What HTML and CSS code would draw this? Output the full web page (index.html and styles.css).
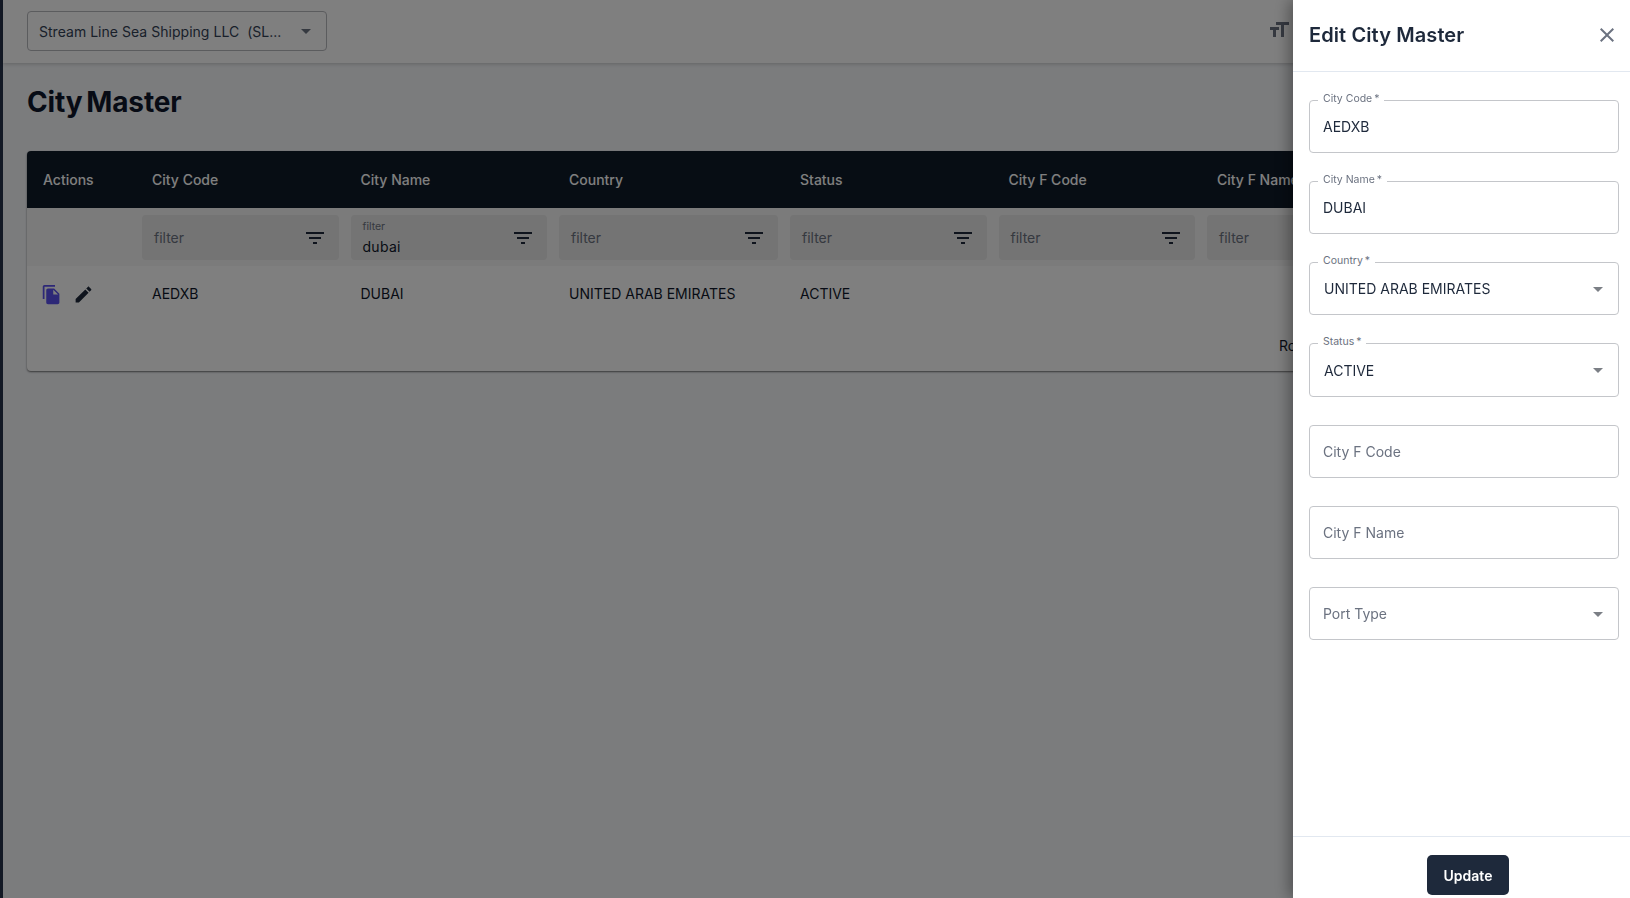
FILE: index.html
```html
<!DOCTYPE html>
<html lang="en">
<head>
  <meta charset="UTF-8">
  <meta name="viewport" content="width=device-width, initial-scale=1.0">
  <title>City Master</title>
  <link rel="stylesheet" href="styles.css">
</head>
<body>
  <svg class="sprite" aria-hidden="true">
    <symbol id="i-drop" viewBox="0 0 24 24"><path d="M7 10l5 5 5-5z"/></symbol>
    <symbol id="i-filter" viewBox="0 0 24 24"><path d="M10 18h4v-2h-4v2zM3 6v2h18V6H3zm3 7h12v-2H6v2z"/></symbol>
    <symbol id="i-size" viewBox="0 0 24 24"><path d="M9 4v3h5v12h3V7h5V4H9zm-6 8h3v7h3v-7h3V9H3v3z"/></symbol>
    <symbol id="i-copy" viewBox="0 0 24 24"><path d="M16 1H4c-1.1 0-2 .9-2 2v14h2V3h12V1zm-1 4l6 6v10c0 1.1-.9 2-2 2H7.99C6.89 23 6 22.1 6 21l.01-14c0-1.1.89-2 1.99-2h7zm-1 7h5.5L14 6.5V12z"/></symbol>
    <symbol id="i-edit" viewBox="0 0 24 24"><path d="M3 17.25V21h3.75L17.81 9.94l-3.75-3.75L3 17.25zM20.71 7.04c.39-.39.39-1.02 0-1.41l-2.34-2.34c-.39-.39-1.02-.39-1.41 0l-1.83 1.83 3.75 3.75 1.83-1.83z"/></symbol>
    <symbol id="i-close" viewBox="0 0 24 24"><path d="M19 6.41 17.59 5 12 10.59 6.41 5 5 6.41 10.59 12 5 17.59 6.41 19 12 13.41 17.59 19 19 17.59 13.41 12z"/></symbol>
  </svg>

  <div class="sidebar"></div>

  <div class="main">
    <header class="topbar">
      <div class="company-select">
        <span class="company-name">Stream Line Sea Shipping LLC&nbsp; (SL...</span>
        <svg class="icon caret"><use href="#i-drop"/></svg>
      </div>
      <svg class="icon font-size-btn"><use href="#i-size"/></svg>
    </header>

    <div class="content">
      <h1>City Master</h1>

      <div class="grid-card">
        <div class="grid-row grid-head">
          <div class="cell cell-first">Actions</div>
          <div class="cell">City Code</div>
          <div class="cell">City Name</div>
          <div class="cell">Country</div>
          <div class="cell">Status</div>
          <div class="cell">City F Code</div>
          <div class="cell">City F Name</div>
        </div>

        <div class="grid-row grid-filters">
          <div></div>
          <div class="filter"><span class="filter-hint">filter</span><svg class="icon"><use href="#i-filter"/></svg></div>
          <div class="filter">
            <div class="filter-filled"><span class="filter-label">filter</span><span class="filter-value">dubai</span></div>
            <svg class="icon"><use href="#i-filter"/></svg>
          </div>
          <div class="filter"><span class="filter-hint">filter</span><svg class="icon"><use href="#i-filter"/></svg></div>
          <div class="filter"><span class="filter-hint">filter</span><svg class="icon"><use href="#i-filter"/></svg></div>
          <div class="filter"><span class="filter-hint">filter</span><svg class="icon"><use href="#i-filter"/></svg></div>
          <div class="filter"><span class="filter-hint">filter</span><svg class="icon"><use href="#i-filter"/></svg></div>
        </div>

        <div class="grid-row grid-data">
          <div class="cell cell-actions">
            <svg class="icon icon-copy"><use href="#i-copy"/></svg>
            <svg class="icon icon-edit"><use href="#i-edit"/></svg>
          </div>
          <div class="cell">AEDXB</div>
          <div class="cell">DUBAI</div>
          <div class="cell">UNITED ARAB EMIRATES</div>
          <div class="cell">ACTIVE</div>
          <div class="cell"></div>
          <div class="cell"></div>
        </div>

        <div class="pager">Rows</div>
      </div>
    </div>
  </div>

  <div class="backdrop"></div>

  <aside class="drawer">
    <div class="drawer-head">
      <h2>Edit City Master</h2>
      <svg class="icon close-btn"><use href="#i-close"/></svg>
    </div>

    <form class="drawer-body">
      <div class="field">
        <span class="field-label">City Code&#8201;*</span>
        <span class="field-value">AEDXB</span>
      </div>
      <div class="field">
        <span class="field-label">City Name&#8201;*</span>
        <span class="field-value">DUBAI</span>
      </div>
      <div class="field field-select">
        <span class="field-label">Country&#8201;*</span>
        <span class="field-value">UNITED ARAB EMIRATES</span>
        <svg class="icon caret"><use href="#i-drop"/></svg>
      </div>
      <div class="field field-select field-status">
        <span class="field-label">Status&#8201;*</span>
        <span class="field-value">ACTIVE</span>
        <svg class="icon caret"><use href="#i-drop"/></svg>
      </div>
      <div class="field">
        <span class="field-empty">City F Code</span>
      </div>
      <div class="field">
        <span class="field-empty">City F Name</span>
      </div>
      <div class="field field-port">
        <span class="field-empty">Port Type</span>
        <svg class="icon caret"><use href="#i-drop"/></svg>
      </div>
    </form>

    <div class="drawer-foot">
      <button type="button" class="btn-update">Update</button>
    </div>
  </aside>
</body>
</html>
```

FILE: styles.css
```css
* {
  box-sizing: border-box;
}
html, body {
  height: 100%;
}
body {
  margin: 0;
  display: flex;
  overflow: hidden;
  font-family: "Inter", "Liberation Sans", sans-serif;
  font-size: 14px;
  color: #0f172a;
  background: #f6f8fb;
}
.sprite {
  display: none;
}
.icon {
  width: 24px;
  height: 24px;
  flex-shrink: 0;
  fill: currentColor;
}

.sidebar {
  width: 3px;
  flex-shrink: 0;
  background: #27324a;
}
.main {
  flex: 1;
  min-width: 0;
}

/* top bar */
.topbar {
  height: 63px;
  padding: 11px 0 0 24px;
  display: flex;
  justify-content: space-between;
  align-items: flex-start;
  background: #fff;
  box-shadow: 0 1px 4px rgba(0, 0, 0, 0.2);
}
.company-select {
  width: 300px;
  height: 40px;
  padding: 0 8px 0 11px;
  display: flex;
  align-items: center;
  justify-content: space-between;
  border: 1px solid #b6b8bc;
  border-radius: 4px;
  color: #334155;
}
.company-name {
  white-space: nowrap;
  letter-spacing: 0.03px;
}
.company-select .caret {
  color: #6b7280;
}
.font-size-btn {
  margin: 7px 339px 0 0;
  color: #6b7280;
}

/* page */
.content {
  padding: 0 0 0 24px;
}
h1 {
  margin: 20px 0 29px;
  font-size: 28px;
  line-height: 39px;
  font-weight: 700;
  letter-spacing: -0.1px;
  word-spacing: -3px;
}

/* city grid */
.grid-card {
  width: 1579px;
  height: 220px;
  border-radius: 4px;
  background: #fff;
  overflow: hidden;
  box-shadow: 0 1px 2px rgba(0, 0, 0, 0.55);
}
.grid-row {
  display: grid;
  grid-template-columns: 109px 208.5px 208.5px 231px 208.5px 208.5px 209px;
}
.grid-head {
  height: 57px;
  align-items: center;
  background: #0e1a28;
  color: #fff;
  font-weight: 500;
}
.grid-filters {
  height: 58px;
  padding-bottom: 6px;
  padding-top: 7px;
  background: #f6f6f6;
}
.grid-data {
  height: 54px;
  align-items: center;
}
.cell {
  padding: 0 16px;
  white-space: nowrap;
}
.cell-first {
  padding-left: 16px;
}
.cell-actions {
  padding: 0 0 0 14px;
  display: flex;
  align-items: center;
  gap: 11px;
  height: 24px;
  margin-top: 3px;
}
.icon-copy {
  width: 21px;
  height: 21px;
  color: #5a50ee;
}
.icon-edit {
  width: 21px;
  height: 21px;
  color: #1e293b;
}
.filter {
  margin: 0 6px;
  padding: 0 12px;
  display: flex;
  align-items: center;
  justify-content: space-between;
  background: #e8e8e8;
  border-radius: 4px;
  color: #1e293b;
}
.filter-hint {
  color: #6b7280;
}
.filter-filled {
  display: flex;
  flex-direction: column;
  padding-top: 1px;
}
.filter-label {
  font-size: 10.5px;
  line-height: 14px;
  color: #6b7280;
}
.filter-value {
  line-height: 20px;
  letter-spacing: 0.3px;
  padding-top: 3px;
  color: #0f172a;
}
.pager {
  height: 51px;
  padding-left: 1252px;
  display: flex;
  align-items: center;
  white-space: nowrap;
}

/* overlay + edit drawer */
.backdrop {
  position: fixed;
  inset: 0;
  background: rgba(0, 0, 0, 0.5);
}
.drawer {
  position: fixed;
  top: 0;
  right: 0;
  bottom: 0;
  width: 337px;
  display: flex;
  flex-direction: column;
  background: #fff;
  box-shadow: -4px 0 14px rgba(0, 0, 0, 0.35);
}
.drawer-head {
  height: 72px;
  padding: 0 11px 1px 16px;
  display: flex;
  align-items: center;
  justify-content: space-between;
  border-bottom: 1px solid #e2e8f0;
}
h2 {
  margin: 0;
  font-size: 20px;
  font-weight: 600;
  letter-spacing: 0.1px;
  color: #1e293b;
}
.close-btn {
  color: #6b7280;
}
.drawer-body {
  flex: 1;
  padding: 28px 11px 0 16px;
  display: flex;
  flex-direction: column;
  gap: 28px;
}
.field {
  position: relative;
  height: 53px;
  padding: 0 13px;
  display: flex;
  align-items: center;
  justify-content: space-between;
  border: 1px solid #c4c6ca;
  border-radius: 4px;
}
.field-select {
  padding-left: 14px;
}
.field-status {
  height: 54px;
}
.field-select .caret,
.field-port .caret {
  margin-right: -5px;
  color: #7b7f85;
}
.field-label {
  position: absolute;
  top: -9px;
  left: 8px;
  padding: 0 5px;
  background: #fff;
  font-size: 10.5px;
  line-height: 13px;
  color: #6b7280;
}
.field-value {
  color: #1e293b;
}
.field-empty {
  color: #6b7280;
}
.drawer-foot {
  height: 62px;
  padding: 18px 0 0 13px;
  display: flex;
  justify-content: center;
  border-top: 1px solid #e2e8f0;
}
.btn-update {
  width: 82px;
  height: 40px;
  border: none;
  border-radius: 5px;
  background: #1e293b;
  color: #fff;
  font-family: inherit;
  font-size: 14px;
  font-weight: 600;
}
```
